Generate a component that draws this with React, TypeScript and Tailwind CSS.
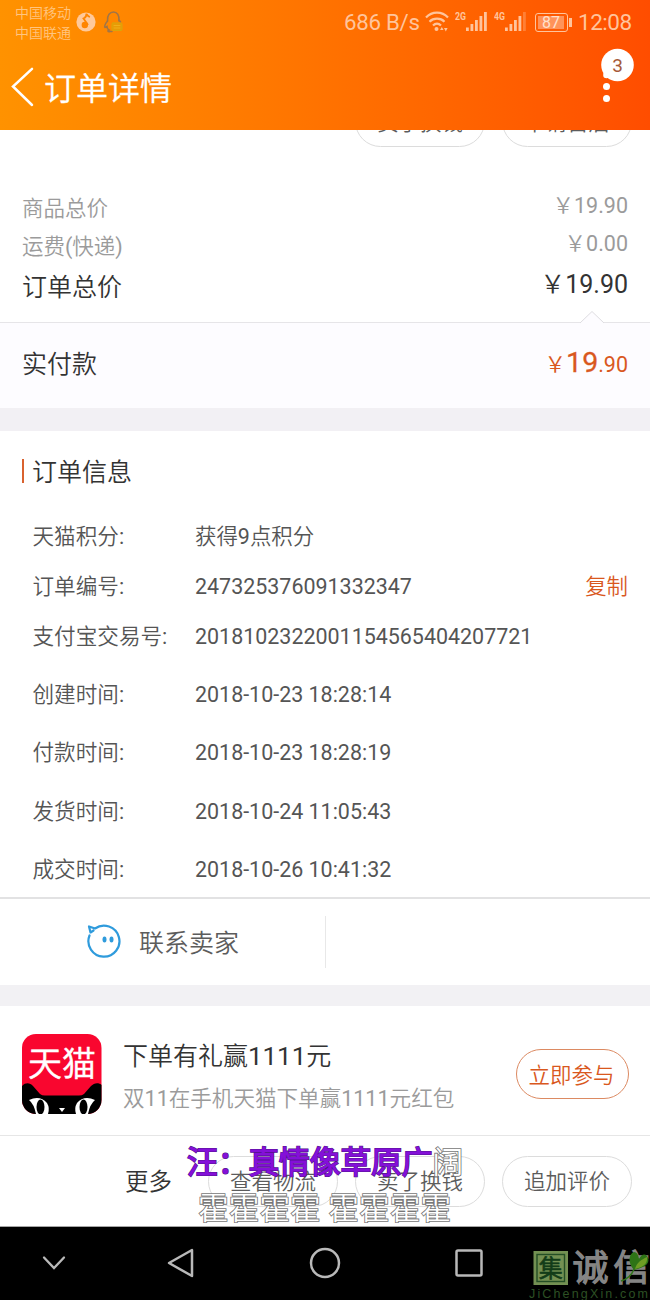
import type { ReactNode } from 'react';

const details = [
  { label: '天猫积分:', value: '获得9点积分', row: 'h-[50px]' },
  { label: '订单编号:', value: '247325376091332347', row: 'h-[50px]', copy: true },
  { label: '支付宝交易号:', value: '2018102322001154565404207721', row: 'h-[50px]' },
  { label: '创建时间:', value: '2018-10-23 18:28:14', row: 'h-[67px]' },
  { label: '付款时间:', value: '2018-10-23 18:28:19', row: 'h-[49px]' },
  { label: '发货时间:', value: '2018-10-24 11:05:43', row: 'h-[68px]' },
  { label: '成交时间:', value: '2018-10-26 10:41:32', row: 'h-[48px]' },
];

function Pill({ children }: { children: ReactNode }) {
  return (
    <div className="flex h-[51px] w-[130px] shrink-0 items-center justify-center rounded-full border border-[#dcdcdc] text-[21.5px] leading-none text-[#5c5c5c]">
      <span className="pt-[2px]">{children}</span>
    </div>
  );
}

function Signal({ label, weak }: { label: string; weak?: boolean }) {
  return (
    <svg width="34" height="24" viewBox="0 0 34 24" fill="#ffc49c">
      <text x="0" y="9.5" fontSize="11" fontWeight="700" textLength="11" lengthAdjust="spacingAndGlyphs">{label}</text>
      <rect x="11" y="17.500" width="2.8" height="3.500" />
      <rect x="15.5" y="14" width="2.8" height="7" />
      <rect x="20" y="10" width="2.8" height="11" />
      <rect x="24.5" y="6" width="2.8" height="15" />
      <rect x="29" y="2" width="2.8" height="19" opacity={weak ? 0.35 : 1} />
    </svg>
  );
}

function StatusBar() {
  return (
    <div className="flex h-[44px] items-center text-[#ffc49c]">
      <div className="ml-[15px] mt-[1px] w-[58px] text-[14px] leading-[20px] text-[#ffc580]">
        <div>中国移动</div>
        <div>中国联通</div>
      </div>
      <svg className="ml-[3px]" width="20" height="20" viewBox="0 0 20 20">
        <circle cx="10" cy="10" r="9.6" fill="#ffc99a" />
        <circle cx="8.800" cy="13" r="3.200" fill="#ff8500" />
        <path d="M12 13 7.500 6.500Q10.500 5.500 10.500 1.500M10.500 2Q12 4.500 14 5" fill="none" stroke="#ff8500" strokeWidth="1.800" />
      </svg>
      <svg className="ml-[7px]" width="22" height="24" viewBox="0 0 22 24" fill="none" strokeLinecap="round">
        <path d="M4.5 11C4 5 7 2 10.500 2s6 3 5.500 9" stroke="#a17546" strokeWidth="1.5" />
        <path d="M4.500 11C2 14 1 17 2 17.500l2-1c0 2 1 3 2 3.500-2 1-1 2 1 1.500h2M16 10l1.500 2" stroke="#a17546" strokeWidth="1.5" />
        <rect x="9" y="13" width="10" height="7.500" rx="1" fill="#e99b05" stroke="#d9a60a" />
        <path d="M11 15.500h6M11 18h6" stroke="#f3b420" strokeWidth=".8" />
      </svg>
      <div className="ml-auto flex items-center">
        <span className="w-[77px] pt-[1px] text-[22.300px] leading-none tracking-[-0.3px] whitespace-nowrap">686 B/s</span>
        <svg className="ml-[3px]" width="26" height="24" viewBox="0 0 26 24" fill="none" stroke="#ffc49c" strokeWidth="2.200">
          <path d="M2 7.500C8 1 18 1 24 7.500M5.500 11.700c4-4 11-4 15 0M9 15.500c2.500-2.500 5.500-2.500 8 0" />
          <circle cx="12.500" cy="19" r="2" fill="#ffc49c" stroke="none" />
          <path d="m16 20 1.800-3 1.800 3zM20 18l1.800 3.500L23.600 18z" fill="#ffc49c" stroke="none" />
        </svg>
        <span className="ml-[5px]"><Signal label="2G" /></span>
        <span className="ml-[5px]"><Signal label="4G" weak /></span>
        <div className="ml-[7px] flex h-[19px] w-[33px] items-center rounded-[3px] border border-[#ffc49c] p-[2px]">
          <div className="flex h-full w-[26px] items-center justify-center bg-[#ff935a] pt-px text-[16px] leading-none text-[#ffe0cc]">87</div>
        </div>
        <div className="ml-[1px] h-[9px] w-[3px] bg-[#ffc49c]" />
        <span className="ml-[6px] mr-[18px] w-[54px] pt-[1px] text-[22.500px] leading-none tracking-[-0.5px]">12:08</span>
      </div>
    </div>
  );
}

function Header() {
  return (
    <header className="h-[130px] bg-linear-to-r from-[#ff9200] via-[#ff7200] to-[#ff4d00]">
      <StatusBar />
      <div className="flex h-[86px] items-center">
        <svg className="ml-[10px]" width="25" height="40" viewBox="0 0 25 40" fill="none" stroke="#fff" strokeWidth="2.500" strokeLinecap="round">
          <path d="M22 1.800 3 19.500 22 38" />
        </svg>
        <h1 className="ml-[9px] pt-[3px] text-[32px] leading-none font-normal text-white [-webkit-text-stroke:0.3px_white]">订单详情</h1>
        <svg className="mb-[22px] ml-auto mr-[16px]" width="36" height="58" viewBox="0 0 36 58" fill="#fff">
          <circle cx="19.500" cy="18" r="16.300" />
          <circle cx="8.500" cy="28" r="3.300" />
          <circle cx="8.500" cy="39.500" r="3.500" />
          <circle cx="8.500" cy="51.500" r="3.500" />
          <text x="19.500" y="24.500" textAnchor="middle" fontSize="19" fill="#a65a38">3</text>
        </svg>
      </div>
    </header>
  );
}

function Totals() {
  return (
    <section>
      <div className="h-[192px] overflow-hidden">
        <div className="-mt-[34px] flex justify-end gap-[17px] pr-[18px]">
          <Pill>卖了换钱</Pill>
          <Pill>申请售后</Pill>
        </div>
        <div className="mt-[41px] flex h-[38px] items-center justify-between pr-[22px] pl-[22px] text-[21.5px] leading-none text-[#9b9b9b]">
          <span className="pt-[3px]">商品总价</span><span className="pb-[2px]">￥19.90</span>
        </div>
        <div className="flex h-[39px] items-center justify-between px-[22px] text-[21.5px] leading-none text-[#9b9b9b]">
          <span className="pt-[3px]">运费(快递)</span><span className="pb-[3px]">￥0.00</span>
        </div>
        <div className="flex h-[42px] items-center justify-between px-[22px] text-[25px] leading-none text-[#333]">
          <span className="pt-[3px]">订单总价</span><span className="pb-[3px]">￥19.90</span>
        </div>
      </div>
      <div className="relative flex h-[86px] items-center justify-between border-t border-[#e6e5e8] bg-[#fdfcff] px-[22px] pb-[5px] leading-none">
        <svg className="absolute -top-[13px] right-[45px]" width="26" height="14" viewBox="0 0 26 14" fill="#fdfcff" stroke="#dedde1">
          <path d="M1 13 13 1.500 25 13" />
        </svg>
        <span className="pt-[2px] text-[25px] text-[#333]">实付款</span>
        <span className="text-[21.500px] text-[#d9581e]">￥<span className="text-[28.500px] [-webkit-text-stroke:0.3px_#d9581e]">19</span>.90</span>
      </div>
    </section>
  );
}

function OrderInfo() {
  return (
    <section className="h-[466px]">
      <div className="flex h-[80px] items-center pl-[22px]">
        <i className="h-[24px] w-[2px] bg-[#d9622f]" />
        <h2 className="ml-[8px] pt-[3px] text-[25px] leading-none font-normal text-[#333]">订单信息</h2>
      </div>
      <div className="text-[21.45px] leading-none text-[#555]">
        {details.map((d) => (
          <div key={d.label} className={`flex items-center pt-px pr-[22px] pl-[32.5px] ${d.row}`}>
            <span className="w-[162.5px] shrink-0 text-[21.600px] whitespace-nowrap">{d.label}</span>
            <span className="whitespace-nowrap">{d.value}</span>
            {d.copy && <span className="ml-auto text-[#d9581e]">复制</span>}
          </div>
        ))}
      </div>
    </section>
  );
}

function Contact() {
  return (
    <section className="flex h-[88px] items-center border-t-2 border-[#e2e2e3]">
      <div className="flex h-[52px] w-[326px] items-center border-r border-[#e8e8e8] pl-[86px]">
        <svg width="36" height="36" viewBox="0 0 36 36" fill="none" stroke="#2f9bdc" strokeWidth="2.200" strokeLinecap="round" strokeLinejoin="round">
          <path d="M3.500 11.500A15.500 15.500 0 1 0 9 4.500L3 2.500l1.500 6 3-2" />
          <ellipse cx="18.500" cy="15.500" rx="2" ry="3" fill="#2f9bdc" stroke="none" />
          <ellipse cx="25.500" cy="15.500" rx="2" ry="3" fill="#2f9bdc" stroke="none" />
        </svg>
        <span className="ml-[17px] pt-[3px] text-[25px] leading-none text-[#5c5c5c]">联系卖家</span>
      </div>
    </section>
  );
}

function TmallLogo() {
  return (
    <svg width="80" height="80" viewBox="0 0 80 80">
      <defs><clipPath id="tile"><rect width="79.500" height="80" rx="14" /></clipPath></defs>
      <g clipPath="url(#tile)">
        <rect width="80" height="80" fill="#f9062f" />
        <path d="M0 52C4 48 8 49 11 52L18 60Q20 61.500 23 61.500H57Q60 61.500 62 60L69 52C72 49 76 48 80 51V80H0z" fill="#000" />
        <path d="M7 66Q18 61 25 69Q28 74 26 80H14Q12 70 7 66zM73 66Q62 61 55 69Q52 74 54 80H66Q68 70 73 66z" fill="#fff" />
        <ellipse cx="18.500" cy="73" rx="4" ry="7.500" />
        <ellipse cx="61.500" cy="73" rx="4" ry="7.500" />
        <path d="M37 74h6l-3 4z" fill="#fff" />
      </g>
      <text x="40" y="42" textAnchor="middle" fontSize="34" fill="#fff" stroke="#fff" strokeWidth=".5">天猫</text>
    </svg>
  );
}

function Promo() {
  return (
    <section className="flex h-[130px] items-center border-b border-[#e6e6e6] pr-[21px] pb-[1px] pl-[22px]">
      <div className="mt-[7px]"><TmallLogo /></div>
      <div className="ml-[21px] mt-[13px] leading-none whitespace-nowrap">
        <div className="text-[25px] text-[#333]">下单有礼赢<span className="text-[25.900px]">1111</span>元</div>
        <div className="mt-[18px] text-[21.55px] text-[#9b9b9b]">双11在手机天猫下单赢1111元红包</div>
      </div>
      <div className="mt-[7px] ml-auto flex h-[50px] w-[113px] items-center justify-center rounded-full border border-[#dc8a62] pr-[2px] text-[21.5px] leading-none text-[#d9581e]">
        <span className="pt-[4px]">立即参与</span>
      </div>
    </section>
  );
}

function Lyrics() {
  return (
    <div className="absolute top-0 left-[187px] text-[30.700px] whitespace-nowrap">
      <div className="pt-[11px] leading-[32px] font-bold">
        <span className="text-[#8410d8] [-webkit-text-stroke:1px_#4b147c] [paint-order:stroke_fill]">汪：真情像草原广</span>
        <span className="font-normal text-white [-webkit-text-stroke:1.7px_#777] [paint-order:stroke_fill]">阔</span>
      </div>
      <div className="mt-[14px] ml-[11px] leading-[32px] text-white [-webkit-text-stroke:1.7px_#777] [paint-order:stroke_fill]">霍霍霍霍 霍霍霍霍</div>
    </div>
  );
}

function Actions() {
  return (
    <section className="relative flex h-[91px] items-center gap-[17px] border-b border-[#a5a5a5] bg-white pl-[125px]">
      <span className="w-[66px] pt-[3px] text-[23.500px] leading-none text-[#333]">更多</span>
      <Pill>查看物流</Pill>
      <Pill>卖了换钱</Pill>
      <Pill>追加评价</Pill>
      <Lyrics />
    </section>
  );
}

function NavBar() {
  return (
    <nav className="relative flex h-[73px] items-center bg-black pb-px text-[#b9b9b9]">
      <svg className="ml-[42px]" width="24" height="16" viewBox="0 0 24 16" fill="none" stroke="currentColor" strokeWidth="2.300" strokeLinecap="round"><path d="m2 2.500 10 10.500L22 2.500" /></svg>
      <svg className="ml-[100px]" width="30" height="34" viewBox="0 0 30 34" fill="none" stroke="currentColor" strokeWidth="2.500" strokeLinejoin="round"><path d="M26 4v26L3 17z" /></svg>
      <svg className="ml-[113px]" width="32" height="32" viewBox="0 0 32 32" fill="none" stroke="currentColor" strokeWidth="2.500"><circle cx="16" cy="16" r="14" /></svg>
      <svg className="ml-[114px]" width="28" height="28" viewBox="0 0 28 28" fill="none" stroke="currentColor" strokeWidth="2.500"><rect x="1.500" y="1.500" width="25" height="25" rx="1.500" /></svg>
      <svg className="absolute right-0 bottom-0" width="122" height="54" viewBox="0 0 122 54">
        <rect x="5.500" y="5" width="34.500" height="34" fill="#739052" />
        <rect x="9" y="8.500" width="27.500" height="27" fill="none" stroke="#244e25" strokeWidth="1.400" />
        <text x="22.700" y="31" textAnchor="middle" fontSize="24" fill="#123c18" stroke="#123c18" strokeWidth=".7">集</text>
        <text x="44.500" y="35" fontSize="36" fill="#858585" stroke="#858585" strokeWidth="1.500" textLength="77">诚信</text>
        <path d="M93 35Q103 32 106 23" fill="none" stroke="#33751b" strokeWidth="1.500" />
        <path d="M106 24C99 16 101 8 106 6q4 0 5 7 4-7 8-3c5 8-4 12-13 14z" fill="#2e7416" />
        <path d="M107 23c2-7 6-9 12-12 1 8-5 10-12 12z" fill="#6e9d24" />
        <text x="1" y="51.500" fontFamily="Liberation Sans" fontSize="12.500" fill="#2d5024" textLength="119">JiChengXin.com</text>
      </svg>
    </nav>
  );
}

export default function App() {
  return (
    <main className="flex h-[1300px] w-[650px] flex-col overflow-hidden bg-white font-[Roboto,'Noto_Sans_CJK_SC_DemiLight','Noto_Sans_CJK_SC',sans-serif]" lang="zh-CN">
      <Header />
      <Totals />
      <div className="h-[23px] shrink-0 bg-[#f2f0f4]" />
      <OrderInfo />
      <Contact />
      <div className="h-[21px] shrink-0 bg-[#f2f1f4]" />
      <Promo />
      <Actions />
      <NavBar />
    </main>
  );
}
